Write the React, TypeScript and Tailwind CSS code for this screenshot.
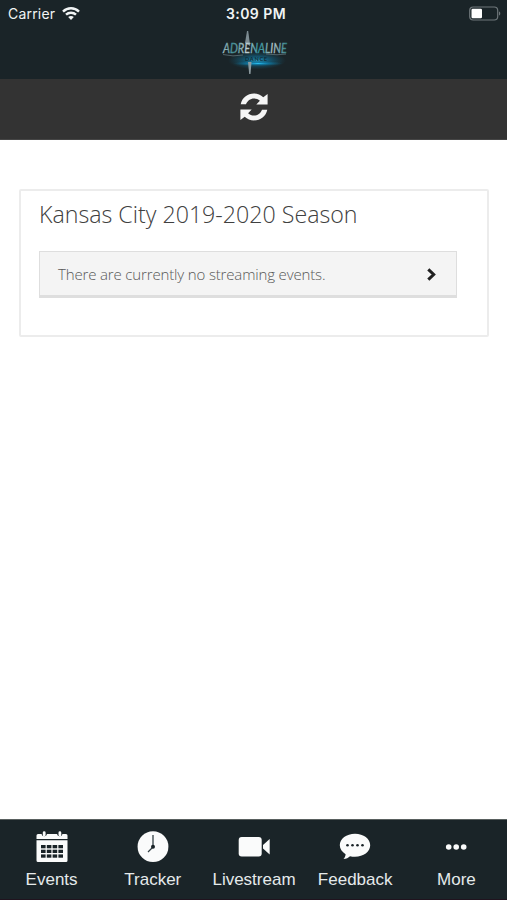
import type { ReactNode } from 'react';

function StatusBar() {
    return (
        <div className="grid h-7 grid-cols-3 items-center pl-2 pr-1.5 font-['Inter',sans-serif] text-[#f1f4f5]">
            {/* Left - Carrier */}
            <div className="flex items-center">
                <span className="w-[54px] text-sm leading-7 tracking-[0.2px]">Carrier</span>
                <svg className="-mt-0.5 h-[13px] w-[18px]" viewBox="0 0 18 13" fill="none" stroke="currentColor" strokeWidth="2.4">
                    <path d="M1 4.6C5.5.2 12.5.2 17 4.6" />
                    <path d="M4 7.7c2.8-2.7 7.2-2.7 10 0" />
                    <path d="M6.2 10.1c1.5-1.5 4.1-1.5 5.6 0L9 12.9z" fill="currentColor" stroke="none" />
                </svg>
            </div>

            {/* Center - Clock */}
            <span className="ml-[3px] text-center text-sm font-semibold leading-7 tracking-[0.45px]">3:09 PM</span>

            {/* Right - Battery */}
            <svg className="-mt-0.5 h-[15px] w-8 justify-self-end" viewBox="0 0 32 15" fill="none">
                <rect x="0.7" y="1" width="28" height="13" rx="3.5" stroke="#6f777b" strokeWidth="1.2" />
                <rect x="2.5" y="2.8" width="10.5" height="9.4" rx="1.2" fill="#ffffff" />
                <path d="M30 5.5c1.7.4 1.7 3.6 0 4z" fill="#6f777b" />
            </svg>
        </div>
    );
}

function Logo() {
    return (
        <svg className="h-[52px] w-20 overflow-visible" viewBox="0 0 80 52">
            <defs>
                <radialGradient id="glow">
                    <stop offset="0" stopColor="#2cc0f0" />
                    <stop offset="0.4" stopColor="#0e7fae" stopOpacity="0.75" />
                    <stop offset="1" stopColor="#126481" stopOpacity="0" />
                </radialGradient>
                <linearGradient id="letters">
                    <stop offset="0" stopColor="#b3bfc4" />
                    <stop offset="0.17" stopColor="#3c8992" />
                    <stop offset="0.38" stopColor="#c3ced2" />
                    <stop offset="0.57" stopColor="#278d9a" />
                    <stop offset="0.78" stopColor="#bac6ca" />
                    <stop offset="1" stopColor="#277a82" />
                </linearGradient>
            </defs>
            <ellipse cx="42" cy="34.5" rx="29" ry="9" fill="url(#glow)" opacity="0.75" />
            <ellipse cx="43" cy="37.5" rx="25" ry="2.5" fill="url(#glow)" />
            <path d="M30 17l2-12h1.2l2 15z" fill="#7d8c92" />
            <path d="M33 36h3.500l-1 12h-1.300z" fill="#8b999e" />
            <text
                x="8"
                y="26.5"
                textLength="64"
                lengthAdjust="spacingAndGlyphs"
                fill="url(#letters)"
                stroke="url(#letters)"
                strokeWidth="0.3"
                className="font-['Lato',sans-serif] text-[14px] font-normal italic leading-none"
            >
                ADRENALINE
            </text>
            <path d="M8 28.5q10 2.5 20 .5M51 28q12 1.5 20 0" fill="none" stroke="#5f737a" strokeWidth="0.8" />
            <text x="30" y="35.3" textLength="22" fill="#12303b" className="font-['Lato',sans-serif] text-[5.5px] font-black leading-none">
                DANCE
            </text>
        </svg>
    );
}

function RefreshIcon() {
    const arrow =
        'M.7 11.3C2 4.8 7.5.5 14 .5c3.6 0 6.8 1.4 9.3 3.7L27.6.9v10.6H16.3l3.6-3.7C18.2 6.2 16.3 5.4 14 5.4c-3.6 0-6.6 2.2-8 5.9z';
    return (
        <svg className="h-7 w-7" viewBox="0 0 28 28" fill="#f5f5f5">
            <path d={arrow} />
            <path d={arrow} transform="rotate(180 14 14)" />
        </svg>
    );
}

function TabIcon({ children }: { children: ReactNode }) {
    return (
        <svg className="h-8 w-8" viewBox="0 0 32 32" fill="#fafbfb">
            {children}
        </svg>
    );
}

const tabs = [
    {
        label: 'Events',
        icon: (
            <TabIcon>
                <path d="M.5 4.5Q.5 3 2 3h3.5a2.8 2.8 0 0 0 5.500 0h10a2.8 2.8 0 0 0 5.500 0H30q1.500 0 1.500 1.500v3.500H.5zM.5 9.300h31v20.200q0 1.500-1.500 1.500H2Q.5 31 .5 29.500z" />
                <rect x="6.8" y="0.3" width="2.8" height="5" rx="1.4" />
                <rect x="22.5" y="0.3" width="2.8" height="5" rx="1.4" />
                {[14, 18.7, 23.4].map((y) =>
                    [5, 10.8, 16.6, 22.4].map((x) => (
                        <rect key={`${x}-${y}`} x={x} y={y} width="4.6" height="3.3" fill="#192327" />
                    ))
                )}
            </TabIcon>
        ),
    },
    {
        label: 'Tracker',
        icon: (
            <TabIcon>
                <circle cx="16" cy="15.7" r="15.4" />
                <path d="M16 4v12l-5 5" fill="none" stroke="#354145" strokeWidth="1.3" />
                <circle cx="16" cy="15.7" r="2" fill="#192327" />
            </TabIcon>
        ),
    },
    {
        label: 'Livestream',
        icon: (
            <TabIcon>
                <rect x="0.7" y="6" width="23" height="19.5" rx="3" />
                <path d="M25 14l6.7-6v15.5L25 17.5z" />
            </TabIcon>
        ),
    },
    {
        label: 'Feedback',
        icon: (
            <TabIcon>
                <path d="M16 2.8c8.6 0 15.2 5 15.2 11.5S24.6 25.8 16 25.8c-1.8 0-3.5-.2-5-.6-1.6 1.5-3.7 2.6-6.5 2.9 1.3-1.5 2-3.3 2.1-4.9C3 21 .8 17.9.8 14.3.8 7.8 7.4 2.8 16 2.8z" />
                {[8.5, 13.5, 18.5, 23.5].map((x) => (
                    <circle key={x} cx={x} cy="14.3" r="1.3" fill="#192327" />
                ))}
            </TabIcon>
        ),
    },
    {
        label: 'More',
        icon: (
            <TabIcon>
                <circle cx="8.7" cy="16" r="2.8" />
                <circle cx="16.2" cy="16" r="2.8" />
                <circle cx="23.7" cy="16" r="2.8" />
            </TabIcon>
        ),
    },
];

export default function App() {
    return (
        <div className="flex h-[900px] w-[507px] flex-col overflow-hidden bg-white">
            <header className="h-[79px] bg-[#1a2428]">
                <StatusBar />
                <div className="-mt-0.5 flex justify-center pl-[3px]">
                    <Logo />
                </div>
            </header>

            {/* Toolbar */}
            <div className="flex h-[61px] items-center justify-center border-b border-[#454545] bg-[#333333] pb-[5px]">
                <button aria-label="Refresh">
                    <RefreshIcon />
                </button>
            </div>

            <main className="flex-1 px-[19px] pt-[49px] font-['Open_Sans',sans-serif]">
                <section className="h-[148px] w-[470px] rounded-[2px] border-2 border-[#ececec] px-[18px] pt-1.5">
                    <h1 className="text-[23.2px] font-light leading-[34px] text-[#404040]">Kansas City 2019-2020 Season</h1>
                    <button className="mt-5 flex h-[47px] w-[418px] items-center justify-between border border-b-[3px] border-[#dedede] bg-[#f4f4f4] pl-[18px] pr-[19px] pt-px">
                        <span className="text-[15px] font-light tracking-[-0.15px] text-[#585858]">There are currently no streaming events.</span>
                        <svg className="h-[13px] w-[10px]" viewBox="0 0 10 13" fill="none" stroke="#202020" strokeWidth="3">
                            <path d="M1.3 1.3L6.7 6.5 1.3 11.7" />
                        </svg>
                    </button>
                </section>
            </main>

            {/* Bottom Tabs */}
            <nav className="grid h-[81px] grid-cols-5 border-b border-t border-b-[#20131e] border-t-[#59605f] bg-[#1a2428] pl-px pt-[11px]">
                {tabs.map((tab) => (
                    <a key={tab.label} href="#" className="flex flex-col items-center">
                        {tab.icon}
                        <span className="mt-[5px] font-['Liberation_Sans',sans-serif] text-[17px] leading-6 text-[#e5eaeb]">{tab.label}</span>
                    </a>
                ))}
            </nav>
        </div>
    );
}
